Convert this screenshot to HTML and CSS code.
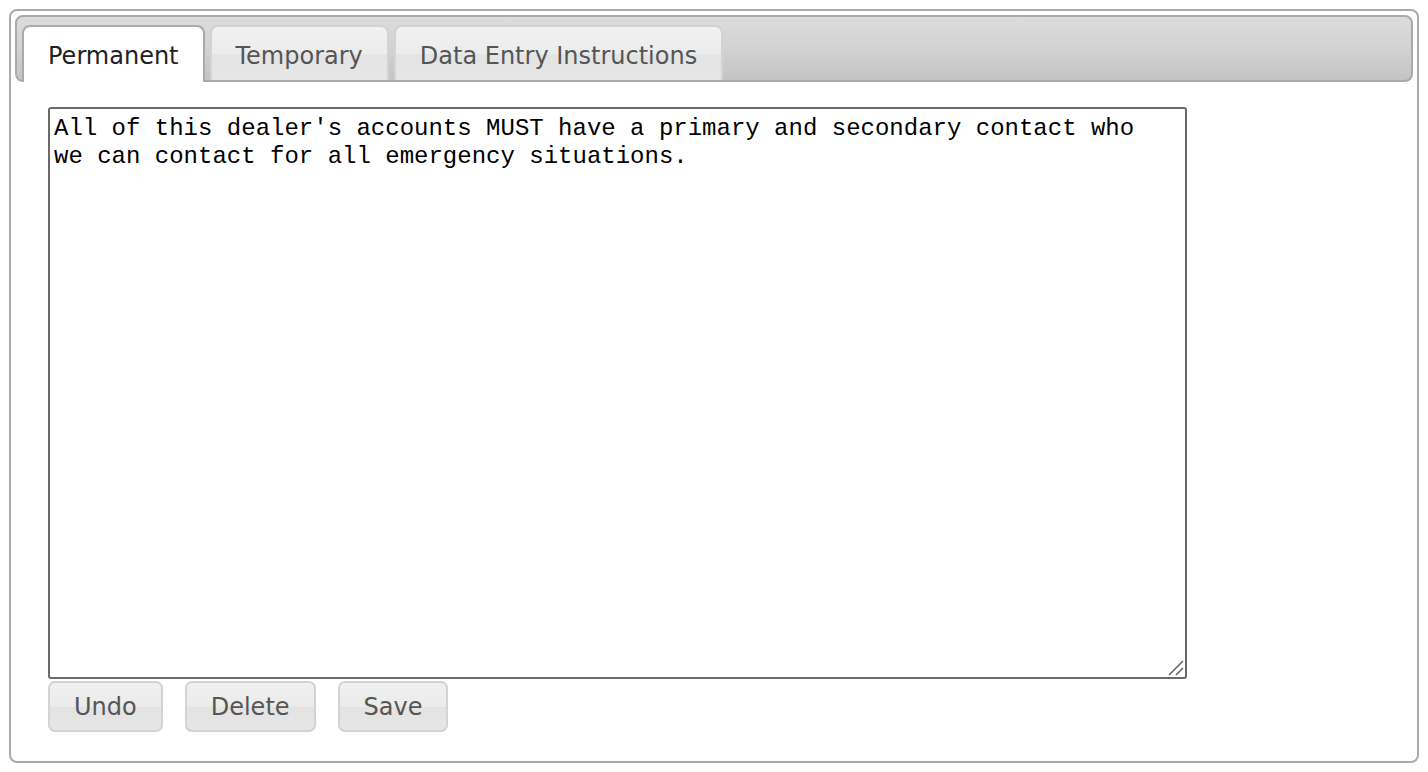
FILE: index.html
```html
<!DOCTYPE html>
<html lang="en">
<head>
<meta charset="utf-8">
<title>Notes</title>
<link rel="stylesheet" href="styles.css">
</head>
<body>
<div class="tabs">
  <ul class="tab-nav">
    <li class="tab active"><a class="tab-link">Permanent</a></li>
    <li class="tab"><a class="tab-link">Temporary</a></li>
    <li class="tab"><a class="tab-link">Data Entry Instructions</a></li>
  </ul>
  <div class="panel">
    <div class="note-wrap">
      <textarea class="note" spellcheck="false">All of this dealer's accounts MUST have a primary and secondary contact who we can contact for all emergency situations.</textarea>
      <svg class="grip" width="18" height="18" viewBox="0 0 18 18" aria-hidden="true">
        <line x1="2" y1="16" x2="16" y2="2" stroke="#666" stroke-width="1.6"/>
        <line x1="9" y1="16" x2="16" y2="9" stroke="#666" stroke-width="1.6"/>
      </svg>
    </div>
    <div class="actions">
      <button class="btn" type="button">Undo</button>
      <button class="btn" type="button">Delete</button>
      <button class="btn" type="button">Save</button>
    </div>
  </div>
</div>
</body>
</html>
```

FILE: styles.css
```css
html, body {
  background: #fff;
}
body {
  margin: 9px;
  font-family: "DejaVu Sans", Verdana, sans-serif;
}
.tabs {
  box-sizing: border-box;
  width: 1410px;
  height: 754px;
  border: 2px solid #aaa;
  border-radius: 8px;
  padding: 4px;
  background: #fff;
  display: flex;
  flex-direction: column;
}
.tab-nav {
  list-style: none;
  margin: 0;
  padding: 8px 5px 0;
  display: flex;
  align-items: flex-start;
  height: 55px;
  flex: none;
  border: 2px solid #aaa;
  border-radius: 8px;
  background: linear-gradient(to bottom, #dcdcdc 0%, #d2d2d2 50%, #c4c4c4 100%);
}
.tab {
  margin: 0 5px 0 0;
  border: 2px solid #d3d3d3;
  border-bottom: 0;
  border-radius: 8px 8px 0 0;
  background: linear-gradient(to bottom, #f1f1f1 0%, #ececec 50%, #e4e4e4 52%, #e6e6e6 100%);
}
.tab-link {
  display: block;
  padding: 15px 24px 9px;
  font-size: 24px;
  line-height: 29px;
  color: #555;
  cursor: pointer;
}
.tab.active {
  border-color: #aaa;
  background: #fff;
  margin-bottom: -2px;
  position: relative;
  z-index: 1;
}
.tab.active .tab-link {
  color: #212121;
  padding-bottom: 11px;
}
.panel {
  padding: 25px 33px 25px;
  display: flex;
  flex-direction: column;
  align-items: flex-start;
}
.note-wrap {
  position: relative;
  width: 1139px;
  height: 572px;
}
.note {
  display: block;
  box-sizing: border-box;
  width: 100%;
  height: 100%;
  margin: 0;
  border: 2px solid #6a6a6a;
  border-radius: 3px;
  padding: 6px 30px 6px 4px;
  font-family: "Liberation Mono", "Courier New", monospace;
  font-size: 24px;
  line-height: 28px;
  color: #000;
  background: #fff;
  resize: none;
  outline: none;
}
.grip {
  position: absolute;
  right: 2px;
  bottom: 2px;
  pointer-events: none;
}
.actions {
  display: flex;
  gap: 22px;
  margin-top: 2px;
}
.btn {
  box-sizing: border-box;
  height: 51px;
  margin: 0;
  padding: 0 24px;
  border: 2px solid #d3d3d3;
  border-radius: 7px;
  background: linear-gradient(to bottom, #f0f0f0 0%, #ebebeb 50%, #e3e3e3 52%, #e6e6e6 100%);
  font-family: "DejaVu Sans", Verdana, sans-serif;
  font-size: 24px;
  color: #555;
  cursor: pointer;
}
```
